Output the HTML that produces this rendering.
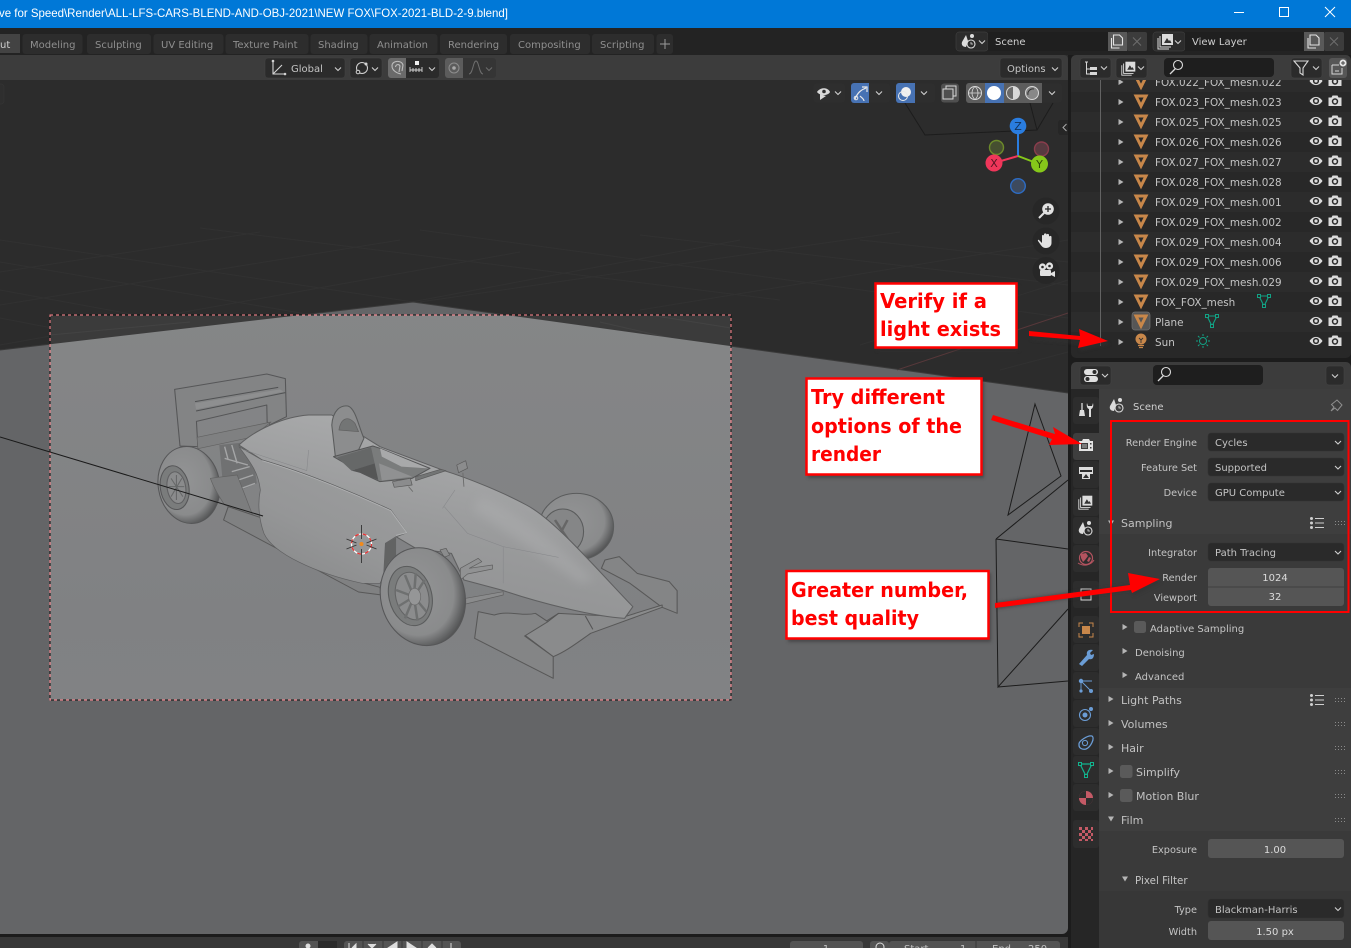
<!DOCTYPE html>
<html><head><meta charset="utf-8"><title>Blender</title>
<style>
html,body{margin:0;padding:0;background:#1c1c1c;overflow:hidden}
svg{display:block}
text{font-family:"DejaVu Sans","Liberation Sans",sans-serif;font-size:10px;fill:#c4c4c4}
#rows text{font-size:10.42px}
.e{text-anchor:end;font-size:9.75px}
.m{text-anchor:middle}
.h{font-size:11px;fill:#c2c2c2}
.b{font-family:"DejaVu Sans",sans-serif;font-weight:bold;font-size:20px;fill:#f00}
.tab{fill:#8f8f8f}
</style></head><body>
<svg xmlns="http://www.w3.org/2000/svg" width="1351" height="948" viewBox="0 0 1351 948">
<defs>
<linearGradient id="fl" x1="0" y1="0" x2="0" y2="1"><stop offset="0" stop-color="#858687"/><stop offset=".5" stop-color="#808183"/><stop offset="1" stop-color="#848587"/></linearGradient>
<linearGradient id="body" x1="0" y1="1" x2=".45" y2="0"><stop offset="0" stop-color="#8c8d8e"/><stop offset=".55" stop-color="#999a9b"/><stop offset="1" stop-color="#abacad"/></linearGradient>
<linearGradient id="pod" x1="0" y1="1" x2=".6" y2="0"><stop offset="0" stop-color="#858687"/><stop offset=".5" stop-color="#959697"/><stop offset="1" stop-color="#9c9d9e"/></linearGradient>
<radialGradient id="ty" cx=".42" cy=".42" r=".62"><stop offset="0" stop-color="#939495"/><stop offset=".74" stop-color="#8a8b8c"/><stop offset="1" stop-color="#4e4f50"/></radialGradient>
<filter id="bl" x="-30%" y="-30%" width="160%" height="160%"><feGaussianBlur stdDeviation="1.6"/></filter>
<filter id="sf" x="-5%" y="-5%" width="110%" height="110%"><feGaussianBlur stdDeviation="1"/></filter>
<filter id="bb" x="-30%" y="-30%" width="160%" height="160%"><feGaussianBlur stdDeviation="14"/></filter>
<path id="ch" d="M-3,-1.5 L0,1.5 L3,-1.5" fill="none" stroke="#d0d0d0" stroke-width="1.1"/>
<path id="ar" d="M-2.5,-3 L2.5,0 L-2.5,3 Z" fill="#b5b5b5"/>
<path id="ad" d="M-3,-2.5 L3,-2.5 L0,2.5 Z" fill="#b5b5b5"/>
<g id="eye"><path d="M-6.5,0 C-3,-5.5 3,-5.5 6.5,0 C3,5.5 -3,5.5 -6.5,0Z" fill="#dcdcdc"/><circle r="3.1" fill="#2a2a2a"/><circle r="1.6" fill="#dcdcdc"/></g>
<g id="cam"><path d="M-6.5,-3.5 h3 l1,-2 h5 l1,2 h3 v8.5 h-13Z" fill="#dcdcdc"/><circle cy=".5" r="3.2" fill="#2a2a2a"/><circle cy=".5" r="1.7" fill="#dcdcdc"/></g>
<path id="me" d="M-5,-5 H5 L0,5 Z" fill="none" stroke="#c8874a" stroke-width="3" stroke-linejoin="miter"/>
<g id="dots" fill="#8a8a8a"><rect x="0" y="-2" width="1" height="1"/><rect x="3" y="-2" width="1" height="1"/><rect x="6" y="-2" width="1" height="1"/><rect x="9" y="-2" width="1" height="1"/><rect x="0" y="1" width="1" height="1"/><rect x="3" y="1" width="1" height="1"/><rect x="6" y="1" width="1" height="1"/><rect x="9" y="1" width="1" height="1"/></g>
<g id="lst" fill="#d0d0d0"><rect x="-7" y="-6" width="3" height="3" rx="1.5"/><rect x="-7" y="-1.5" width="3" height="3" rx="1.5"/><rect x="-7" y="3" width="3" height="3" rx="1.5"/><rect x="-2" y="-5" width="9" height="1"/><rect x="-2" y="-.5" width="9" height="1"/><rect x="-2" y="4" width="9" height="1"/></g>
<g id="sc"><path d="M-3,-7 L-7,0 C-8,3 -6,5 -3,5 L-1,-1 Z" fill="#dcdcdc"/><circle cx="3" cy="-6" r="2" fill="#dcdcdc"/><circle cx="2" cy="2" r="4" fill="none" stroke="#dcdcdc" stroke-width="1.1"/><path d="M2,0 V2 H4" stroke="#dcdcdc" fill="none" stroke-width=".8"/></g>
<g id="vl"><path d="M-4,-7 H7 V4 H-4Z" fill="#dcdcdc"/><path d="M-2,2 L1,-3 L3,0 L4,-1 L5.5,2Z" fill="#333"/><path d="M-6,-5 V6 H5 M-8,-3 V8 H3" fill="none" stroke="#dcdcdc" stroke-width="1"/></g>
<g id="copy"><path d="M-4,-6 H2 L5,-3 V4 H-4 Z" fill="none" stroke="#e4e4e4" stroke-width="1.1"/><path d="M-6,-3 V7 H2" fill="none" stroke="#e4e4e4" stroke-width="1.1"/></g>
</defs>

<!-- ===== viewport ===== -->
<rect x="0" y="55" width="1068" height="879" fill="#2c2c2c"/>
<!-- grid -->
<g stroke="#363636" stroke-width="1" fill="none" opacity=".55">
<path d="M0,240 L600,330 M0,262 L460,340 M0,290 L300,345 M0,318 L140,345 M200,228 L780,300 M420,230 L1068,318 M640,235 L1068,285 M860,240 L1068,262"/>
<path d="M0,345 L520,252 M0,305 L400,240 M0,272 L260,232 M210,340 L740,240 M420,302 L900,232 M640,310 L1068,240 M860,345 L1068,280 M1000,370 L1068,352"/>
</g>
<!-- plane -->
<path d="M413,302 L1068,393 L1068,934 L0,934 L0,350 Z" fill="#646567"/>
<path d="M897,370 L1068,313" stroke="#5c3a3c" stroke-width="1" opacity=".9"/>
<path d="M0,350 L413,302 L1068,393" fill="none" stroke="#3a3a3a" stroke-width="1"/>
<!-- camera frame interior -->
<rect x="50" y="315" width="681" height="385" fill="#3b3b3b"/>
<g stroke="#474747" stroke-width="1" opacity=".7"><path d="M50,335 L190,322 M50,352 L120,340 M600,322 L731,352 M650,315 L731,328"/></g>
<clipPath id="fr"><rect x="50" y="315" width="681" height="385"/></clipPath>
<path d="M413,302 L1068,393 L1068,934 L0,934 L0,350 Z" fill="url(#fl)" clip-path="url(#fr)"/>
<rect x="50" y="315" width="681" height="385" fill="none" stroke="#111" stroke-width="1"/>
<rect x="50" y="315" width="681" height="385" fill="none" stroke="#ff8088" stroke-width="1" stroke-dasharray="3 3"/>

<!-- car -->
<g transform="translate(130,350) scale(.35714,.33333)" stroke-linejoin="round" filter="url(#sf)">
 <!-- far front wheel -->
 <ellipse cx="1250" cy="530" rx="104" ry="100" fill="url(#ty)" stroke="#5a5b5c" stroke-width="3"/>
 <ellipse cx="1212" cy="545" rx="58" ry="68" fill="#858687" stroke="#5a5b5c" stroke-width="3"/>
 <path d="M1190,510 L1240,590 M1225,510 L1195,570" stroke="#666" stroke-width="7"/>
 <!-- rear wing -->
 <path d="M125,118 L383,72 L435,86 L438,200 L392,224 L384,216 L383,165 L186,214 L190,290 L140,288 Z" fill="#838485" stroke="#565758" stroke-width="3"/>
 <path d="M182,155 L415,112 M185,183 L435,128" stroke="#505152" stroke-width="3" fill="none"/>
 <path d="M182,160 L420,118 L430,125 L185,178Z" fill="#8e8f90"/>
 <path d="M188,262 L395,216 L340,262 L190,296 Z" fill="#7f8081" stroke="#626262" stroke-width="2"/>
 <!-- rear suspension -->
 <path d="M250,285 L340,275 L355,400 L300,425 L260,400 Z" fill="#707172"/>
 <path d="M265,290 L275,330 M285,285 L300,340 M265,325 L330,345 M285,365 L335,350 M290,395 L345,375 M300,420 L350,400" stroke="#a5a6a7" stroke-width="4" fill="none"/>
 <!-- rear wheel -->
 <ellipse cx="165" cy="405" rx="86" ry="116" transform="rotate(-8 165 405)" fill="url(#ty)" stroke="#565758" stroke-width="3"/>
 <ellipse cx="125" cy="413" rx="40" ry="66" transform="rotate(-8 125 413)" fill="#7a7b7c" stroke="#565758" stroke-width="3"/>
 <ellipse cx="130" cy="413" rx="26" ry="48" transform="rotate(-8 130 413)" fill="#8a8b8c" stroke="#606162" stroke-width="3"/>
 <path d="M130,375 V450 M108,410 H152 M115,385 L148,440 M145,385 L115,440" stroke="#666768" stroke-width="3"/>
 <!-- fender -->
 <path d="M225,385 L300,375 L318,425 L345,500 L265,465 C250,440 235,415 225,385Z" fill="#7c7d7e" stroke="#626262" stroke-width="2"/>
 <!-- floor -->
 <path d="M262,510 L275,470 L372,505 L640,695 L700,712 L705,735 L640,726 Z" fill="#808182" stroke="#585858" stroke-width="3"/>
 <!-- front wing -->
 <path d="M1330,630 L1370,620 L1420,670 L1510,695 L1532,722 L1532,790 L1490,772 L1400,700 L1320,655 Z" fill="#848586" stroke="#585858" stroke-width="3"/>
 <path d="M1105,855 L1200,790 L1285,795 L1385,800 L1490,765 L1490,772 L1290,850 C1250,880 1220,905 1185,920 Z" fill="#8a8b8c" stroke="#585858" stroke-width="3"/>
 <path d="M975,785 L1020,795 C1060,780 1100,800 1135,790 L1170,815 L1105,858 L1185,920 L1185,985 L965,865 Z" fill="#848586" stroke="#585858" stroke-width="3"/>
 <path d="M1275,798 L1296,838 M1200,790 L1170,815" stroke="#555" stroke-width="3"/>
 <!-- body -->
 <path d="M305,285 C350,240 430,200 500,195 L565,195 L640,250 L700,290 L880,362 C950,385 1050,430 1110,465 C1190,510 1300,650 1408,770 L1385,805 C1300,800 1150,760 1040,720 L935,690 L900,610 L800,595 L745,560 L775,548 L730,480 C650,440 500,370 370,330 Z" fill="url(#body)" stroke="#5e5f60" stroke-width="3"/>
 <path d="M305,290 C340,340 360,370 365,420 C355,470 365,520 375,550 C400,610 520,670 650,700 L700,700 L710,680 L715,580 L745,560 L775,548 L730,480 C650,440 500,370 370,330 Z" fill="url(#pod)" stroke="#606162" stroke-width="2"/>
 <path d="M980,440 C1080,480 1200,580 1300,690 L1260,700 C1150,620 1050,540 960,480Z" fill="#b0b1b2" opacity=".4" filter="url(#bb)"/>
 <path d="M710,680 L715,580 L745,562 L745,620 C725,630 715,650 710,680Z" fill="#626364"/>
 <path d="M370,332 C500,372 650,442 730,482 L775,548 L745,556" fill="none" stroke="#aeafb0" stroke-width="3"/>
 <path d="M880,470 L945,550 L1045,590 L1200,622 M910,420 L875,475 M1045,590 L1045,700 M320,300 L495,362 L500,300" stroke="#86878a" stroke-width="1.500" fill="none"/>
 <!-- roll hoop + cockpit -->
 <path d="M565,225 C568,180 590,165 610,168 C632,175 640,230 655,265 L640,300 L575,320 Z" fill="#8c8d8e" stroke="#5a5b5c" stroke-width="3"/>
 <path d="M585,240 C590,205 610,195 630,220 L640,245 Z" fill="#737475" stroke="#606060" stroke-width="2"/>
 <path d="M570,320 L680,288 L700,295 L840,355 L790,385 L700,395 L650,370 Z" fill="#7a7b7c" stroke="#555657" stroke-width="3"/>
 <path d="M580,322 L675,292 L685,340 L620,362 Z" fill="#666768"/>
 <path d="M620,362 L685,340 L695,390 L650,370Z" fill="#555657"/>
 <path d="M697,340 L790,380 L705,392 Z" fill="#909192"/>
 <path d="M700,295 L835,355 L760,350 L705,320Z" fill="#a8a9aa"/>
 <path d="M800,392 L885,362 L870,358 L800,380Z" fill="#737475" stroke="#585858" stroke-width="2"/>
 <path d="M735,395 L785,385 L790,405 L740,412Z" fill="#8b8c8d" stroke="#5a5a5a" stroke-width="2"/>
 <path d="M915,345 L940,332 L945,355 L920,368Z" fill="#8b8c8d" stroke="#5a5a5a" stroke-width="2"/>
 <path d="M932,368 L935,410 M780,410 L792,425" stroke="#6a6a6a" stroke-width="2.500"/>
 <!-- front suspension -->
 <path d="M925,655 L975,625 L985,635 L950,655 L1015,645 L1015,657 L945,672 L925,690Z" fill="#919293" stroke="#606060" stroke-width="2"/>
 <path d="M940,745 L1045,725 L1045,735 L940,762Z" fill="#8a8b8c" stroke="#606060" stroke-width="2"/>
 <path d="M868,600 L885,595 L895,615 L880,622Z" fill="#8b8c8d" stroke="#5a5a5a" stroke-width="2"/>
 <!-- front wheel -->
 <ellipse cx="820" cy="740" rx="118" ry="148" transform="rotate(-12 820 740)" fill="url(#ty)" stroke="#565758" stroke-width="3"/>
 <ellipse cx="785" cy="738" rx="60" ry="90" transform="rotate(-12 785 738)" fill="#7a7b7c" stroke="#5a5b5c" stroke-width="3"/>
 <ellipse cx="790" cy="738" rx="46" ry="72" transform="rotate(-12 790 738)" fill="#8b8c8d" stroke="#626364" stroke-width="3"/>
 <path d="M795,740 L770,675 M795,740 L800,670 M795,740 L745,720 M795,740 L825,690 M795,740 L750,770 M795,740 L770,805 M795,740 L805,812 M795,740 L830,785" stroke="#6e6f70" stroke-width="7"/>
 <ellipse cx="797" cy="740" rx="17" ry="25" fill="#959697" stroke="#6a6a6a" stroke-width="2"/>
</g>
<!-- lines -->
<path d="M0,437 L263,516" stroke="#1a1a1a" stroke-width="1" fill="none"/>
<!-- 3d cursor -->
<g transform="translate(361.5,544)" fill="none">
 <circle r="10" stroke="#fff" stroke-width="1.300"/>
 <circle r="10" stroke="#e63232" stroke-width="1.300" stroke-dasharray="4 4"/>
 <path d="M0,-19 V-5 M0,5 V19 M-15,-5 L-5,-1 M5,1 L15,5 M-15,5 L-5,1 M5,-1 L15,-5" stroke="#333" stroke-width=".9"/>
 <circle r="2" fill="#f08a1c"/>
</g>
<!-- camera wire -->
<g fill="none" stroke="#1c1c1c" stroke-width="1">
 <path d="M1035,404 L1061,476 L1008,515 Z"/>
 <path d="M996,539 L1068,480 M996,539 L1068,549 M996,539 L998,687 L1068,609 M998,687 L1068,681"/>
 <path d="M905,103 L925,135 L1037,130 L1053,103 M1030,103 L1037,130"/>
</g>

<!-- nav gizmo -->
<g>
 <path d="M1018,126 V156" stroke="#2a7de0" stroke-width="2"/>
 <path d="M1018,156 L994,163" stroke="#f0365a" stroke-width="2"/>
 <path d="M1018,156 L1039,164" stroke="#86c81a" stroke-width="2"/>
 <circle cx="996.500" cy="147.500" r="7" fill="#464f30" stroke="#6c8a2a" stroke-width="1.400"/>
 <circle cx="1041.500" cy="149" r="7" fill="#573a40" stroke="#8a3d4c" stroke-width="1.400"/>
 <circle cx="1018" cy="186" r="7.300" fill="#3d4a5e" stroke="#2d6cc4" stroke-width="1.400"/>
 <circle cx="1018" cy="126" r="8.300" fill="#2a7de0"/>
 <circle cx="994" cy="163" r="8.500" fill="#f0365a"/>
 <circle cx="1039.500" cy="164" r="8.500" fill="#86c81a"/>
 <text x="1018" y="130" class="m" style="fill:#12325c;font-size:11px">Z</text>
 <text x="994" y="167" class="m" style="fill:#5a1424;font-size:11px">X</text>
 <text x="1039.500" y="168" class="m" style="fill:#2e4a08;font-size:11px">Y</text>
</g>
<circle cx="1046" cy="211" r="13.500" fill="#272727"/>
<circle cx="1046" cy="241" r="13.500" fill="#272727"/>
<circle cx="1046" cy="270.500" r="13.500" fill="#272727"/>
<g fill="#e2e2e2">
 <circle cx="1048" cy="209" r="5.800"/><path d="M1044,213 L1039,218" stroke="#e2e2e2" stroke-width="2"/>
 <path d="M1045,209 H1051 M1048,206 V212" stroke="#272727" stroke-width="1.300"/>
 <path d="M1039,240 L1042,243 V236 C1042,234.500 1044,234.500 1044,236 V234.500 C1044,233 1046.500,233 1046.500,234.500 V235 C1046.500,233.500 1049,233.500 1049,235 V237 C1049,235.500 1051.500,235.500 1051.500,237 V243 C1051.500,246 1049,248 1046,248 C1042,248 1041,245 1038,241 C1037.500,240 1038.500,239.500 1039,240Z"/>
 <circle cx="1042.500" cy="267" r="3.600"/><circle cx="1049.500" cy="266" r="3.600"/>
 <rect x="1040" y="270" width="11" height="6" rx="1"/><path d="M1051,273 L1055,271 V277 L1051,275Z"/>
</g>
<g fill="#272727"><circle cx="1042.500" cy="267" r="1.300"/><circle cx="1049.500" cy="266" r="1.300"/></g>
<path d="M1060,120 h8 v15 h-8 a4,4 0 0 1 -2,-3 v-9 a4,4 0 0 1 2,-3Z" fill="#262626"/>
<path d="M1066.500,124 L1063,127.500 L1066.500,131" fill="none" stroke="#aaa" stroke-width="1"/>
<path d="M0,84 h1 a3,3 0 0 1 3,3 v14 a3,3 0 0 1 -3,3 h-1" fill="#2e2e2e" stroke="#343434" stroke-width=".7"/>

<!-- viewport overlays row -->
<g>
 <rect x="813.500" y="83.500" width="31.500" height="19" rx="3" fill="#2e2e2e"/>
 <path d="M817,92 C820,87 828,87 830,92 C828,96 820,96 817,92Z" fill="#d8d8d8"/><circle cx="824" cy="91.500" r="1.800" fill="#2e2e2e"/><path d="M820,94 L820,100 L826,96Z" fill="#d8d8d8"/>
 <use href="#ch" x="838" y="93"/>
 <rect x="851" y="83.500" width="39" height="19" rx="3" fill="#2e2e2e"/>
 <path d="M851,86 a3,3 0 0 1 3,-3 h15 v20 h-15 a3,3 0 0 1 -3,-3Z" fill="#4772b3"/>
 <path d="M855,99 C858,92 861,90 866,88 M862,87 H867 V92 M860,96 C862,98 864,99 864,101" fill="none" stroke="#eaeaea" stroke-width="1.200"/><circle cx="856" cy="98" r="1.800" fill="none" stroke="#eaeaea"/>
 <use href="#ch" x="879" y="93"/>
 <rect x="896" y="83.500" width="39" height="19" rx="3" fill="#2e2e2e"/>
 <path d="M896,86 a3,3 0 0 1 3,-3 h16 v20 h-16 a3,3 0 0 1 -3,-3Z" fill="#4772b3"/>
 <circle cx="906" cy="92" r="5" fill="#f0f0f0"/><circle cx="903" cy="96" r="4.500" fill="none" stroke="#eaeaea"/>
 <use href="#ch" x="924" y="93"/>
 <rect x="941" y="83.500" width="18" height="19" rx="3" fill="#4f4f4f"/>
 <rect x="946" y="86" width="10" height="10" fill="none" stroke="#d8d8d8"/><rect x="943" y="89" width="10" height="10" fill="#4f4f4f" stroke="#d8d8d8"/>
 <rect x="966" y="83.500" width="96" height="19" rx="3" fill="#2e2e2e"/>
 <path d="M966,86 a3,3 0 0 1 3,-3 h73 v20 h-73 a3,3 0 0 1 -3,-3Z" fill="#5d5d5d"/>
 <rect x="985" y="83" width="19" height="20" fill="#4772b3"/>
 <circle cx="975" cy="93" r="6.500" fill="none" stroke="#d8d8d8"/><path d="M968.500,93 H981.500 M975,86.500 C971,90 971,96 975,99.500 C979,96 979,90 975,86.500" fill="none" stroke="#d8d8d8" stroke-width=".8"/>
 <circle cx="994" cy="93" r="7" fill="#fff"/>
 <circle cx="1013" cy="93" r="6.500" fill="#6a6a6a" stroke="#d8d8d8"/><path d="M1013,86.500 a6.500,6.500 0 0 1 0,13Z" fill="#d8d8d8"/>
 <circle cx="1032" cy="93" r="6.500" fill="#888" stroke="#d8d8d8"/><path d="M1028,95 a5,5 0 0 1 6,-6" fill="none" stroke="#333"/>
 <use href="#ch" x="1052" y="93"/>
</g>

<!-- viewport header -->
<path d="M0,55 H1064 a4,4 0 0 1 4,4 V80 H0Z" fill="#3c3c3c"/>
<rect x="265" y="58" width="80" height="20" rx="3" fill="#2b2b2b" stroke="#444" stroke-width=".5"/>
<path d="M273,61 V74 H285 M273,74 L282,65" fill="none" stroke="#d4d4d4" stroke-width="1.100"/><circle cx="273" cy="61" r="1.300" fill="#d4d4d4"/><circle cx="285" cy="74" r="1.300" fill="#d4d4d4"/>
<text x="291" y="72">Global</text><use href="#ch" x="338" y="69"/>
<rect x="350" y="58" width="32" height="20" rx="3" fill="#2b2b2b" stroke="#444" stroke-width=".5"/>
<circle cx="362" cy="68" r="5.500" fill="none" stroke="#d4d4d4"/><circle cx="358" cy="72" r="1.800" fill="#2b2b2b" stroke="#d4d4d4"/><circle cx="366" cy="64" r="1.500" fill="#d4d4d4"/><use href="#ch" x="375" y="69"/>
<rect x="388" y="58" width="51" height="20" rx="3" fill="#2b2b2b"/>
<path d="M388,61 a3,3 0 0 1 3,-3 h15 v20 h-15 a3,3 0 0 1 -3,-3Z" fill="#6a6a6a"/>
<path d="M401,74 C396,73 392,70 392,66 C392,60 402,60 403,65 L402,71 M399,72 L400,66 C399,64 396,64 395.500,67" fill="none" stroke="#bdbdbd" stroke-width="1.100"/>
<path d="M410,67 V72 M410,70 H422 M413,68 V72 M416,68 V72 M419,68 V72 M422,67 V72" stroke="#d4d4d4" stroke-width=".9"/><rect x="415" y="61" width="4" height="4" fill="#eee"/><use href="#ch" x="432" y="69"/>
<rect x="445" y="58" width="51" height="20" rx="3" fill="#353535"/>
<path d="M445,61 a3,3 0 0 1 3,-3 h15 v20 h-15 a3,3 0 0 1 -3,-3Z" fill="#5c5c5c"/>
<circle cx="454" cy="68" r="5" fill="none" stroke="#8e8e8e"/><circle cx="454" cy="68" r="1.800" fill="#a8a8a8"/>
<path d="M469,74 C473,74 473,61 476,61 C479,61 479,74 483,74" fill="none" stroke="#6e6e6e"/><use href="#ch" x="489" y="69" opacity=".35"/>
<rect x="1000" y="58" width="62" height="20" rx="3" fill="#2b2b2b" stroke="#444" stroke-width=".5"/>
<text x="1007" y="72">Options</text><use href="#ch" x="1055" y="69"/>

<!-- separator strips / bottom -->
<rect x="0" y="934" width="1070" height="3" fill="#1c1c1c"/>
<path d="M1062,934 a6,6 0 0 0 6,-6 v6Z" fill="#1c1c1c"/>
<rect x="0" y="937" width="1070" height="11" fill="#383838"/>
<rect x="299" y="941" width="38" height="10" rx="3" fill="#545454"/><rect x="318" y="941" width="19" height="10" fill="#2b2b2b"/><circle cx="308" cy="946" r="2.500" fill="#ddd"/>
<rect x="344" y="941" width="117" height="10" rx="3" fill="#545454"/>
<path d="M363,941 V951 M383,941 V951 M402,941 V951 M422,941 V951 M442,941 V951" stroke="#383838"/>
<path d="M349,943 V948 M352,948 L356,944 V948 M368,944 L372,948 L376,944 M397,942 L388,948 H397Z M407,942 L416,948 H407Z M428,948 L432,944 L436,948 M451,943 V948" stroke="#ddd" fill="#ddd"/>
<rect x="790" y="941" width="73" height="10" rx="3" fill="#545454"/><text x="826" y="952" class="m">1</text>
<rect x="870" y="941" width="19" height="10" rx="3" fill="#545454"/><circle cx="880" cy="947" r="4" fill="none" stroke="#ddd"/>
<rect x="889" y="941" width="171" height="10" rx="3" fill="#545454"/><path d="M976,941 V951" stroke="#383838"/>
<text x="904" y="952">Start</text><text x="960" y="952">1</text><text x="992" y="952">End</text><text x="1028" y="952">250</text>

<!-- ===== top bars ===== -->
<rect x="0" y="0" width="1351" height="28" fill="#0078d7"/>
<text x="-1" y="17" textLength="509" lengthAdjust="spacingAndGlyphs" style="font-family:'Liberation Sans',sans-serif;font-size:12px;fill:#fff">ve for Speed\Render\ALL-LFS-CARS-BLEND-AND-OBJ-2021\NEW FOX\FOX-2021-BLD-2-9.blend]</text>
<path d="M1234,12.500 H1244" stroke="#fff"/><rect x="1279.500" y="7.500" width="9" height="9" fill="none" stroke="#fff"/><path d="M1325,7 L1335,17 M1335,7 L1325,17" stroke="#fff"/>
<rect x="0" y="28" width="1351" height="27" fill="#232323"/>
<rect x="0" y="34" width="20" height="19" fill="#434343"/>
<text x="0" y="48" style="fill:#d0d0d0">ut</text>
<g fill="#2d2d2d">
<rect x="22.500" y="34" width="60" height="20" rx="3"/><rect x="87" y="34" width="64" height="20" rx="3"/><rect x="153.500" y="34" width="70" height="20" rx="3"/><rect x="225.500" y="34" width="83" height="20" rx="3"/><rect x="310.500" y="34" width="57" height="20" rx="3"/><rect x="369.500" y="34" width="68" height="20" rx="3"/><rect x="440" y="34" width="67" height="20" rx="3"/><rect x="510" y="34" width="80" height="20" rx="3"/><rect x="592" y="34" width="62" height="20" rx="3"/><rect x="656.500" y="34" width="16.500" height="20" rx="3"/>
</g>
<g class="tab">
<text x="30" y="48" class="tab">Modeling</text><text x="95" y="48" class="tab">Sculpting</text><text x="161" y="48" class="tab">UV Editing</text><text x="233" y="48" class="tab">Texture Paint</text><text x="318" y="48" class="tab">Shading</text><text x="377" y="48" class="tab">Animation</text><text x="448" y="48" class="tab">Rendering</text><text x="518" y="48" class="tab">Compositing</text><text x="600" y="48" class="tab">Scripting</text>
</g>
<path d="M665,39 V49 M660,44 H670" stroke="#9a9a9a"/>

<!-- scene widgets -->
<rect x="956" y="32" width="32" height="19" rx="3" fill="#2c2c2c" stroke="#464646" stroke-width=".5"/>
<use href="#sc" x="969" y="42"/><use href="#ch" x="982" y="42"/>
<rect x="988" y="32" width="120" height="19" fill="#1f1f1f"/><text x="995" y="45" style="fill:#cfcfcf">Scene</text>
<rect x="1108" y="32" width="19" height="19" fill="#595959"/><use href="#copy" x="1117.500" y="41"/>
<rect x="1127" y="32" width="20" height="19" rx="2" fill="#3c3c3c"/><path d="M1133,37.500 L1141,45.500 M1141,37.500 L1133,45.500" stroke="#6e6e6e"/>
<rect x="1153" y="32" width="32" height="19" rx="3" fill="#2c2c2c" stroke="#464646" stroke-width=".5"/>
<use href="#vl" x="1166" y="41"/><use href="#ch" x="1178" y="42"/>
<rect x="1185" y="32" width="119" height="19" fill="#1f1f1f"/><text x="1192" y="45" style="fill:#cfcfcf">View Layer</text>
<rect x="1304" y="32" width="20" height="19" fill="#595959"/><use href="#copy" x="1314" y="41"/>
<rect x="1324" y="32" width="20" height="19" rx="2" fill="#3c3c3c"/><path d="M1330,37.500 L1338,45.500 M1338,37.500 L1330,45.500" stroke="#6e6e6e"/>

<!-- ===== outliner ===== -->
<rect x="1068" y="55" width="283" height="893" fill="#1c1c1c"/>
<rect x="1071" y="55" width="280" height="303" rx="5" fill="#282828"/>
<g fill="#2c2c2c">
<rect x="1071" y="72" width="280" height="20"/><rect x="1071" y="112" width="280" height="20"/><rect x="1071" y="152" width="280" height="20"/><rect x="1071" y="192" width="280" height="20"/><rect x="1071" y="232" width="280" height="20"/><rect x="1071" y="272" width="280" height="20"/><rect x="1071" y="312" width="280" height="20"/>
</g>
<path d="M1100.500,80 V346" stroke="#636363"/>
<g id="rows">
<use href="#ar" x="1121" y="82"/><use href="#me" x="1141" y="82"/><text x="1155" y="86">FOX.022_FOX_mesh.022</text><use href="#eye" x="1316" y="81"/><use href="#cam" x="1335" y="81"/>
<use href="#ar" x="1121" y="102"/><use href="#me" x="1141" y="101"/><text x="1155" y="106">FOX.023_FOX_mesh.023</text><use href="#eye" x="1316" y="101"/><use href="#cam" x="1335" y="101"/>
<use href="#ar" x="1121" y="122"/><use href="#me" x="1141" y="121"/><text x="1155" y="126">FOX.025_FOX_mesh.025</text><use href="#eye" x="1316" y="121"/><use href="#cam" x="1335" y="121"/>
<use href="#ar" x="1121" y="142"/><use href="#me" x="1141" y="141"/><text x="1155" y="146">FOX.026_FOX_mesh.026</text><use href="#eye" x="1316" y="141"/><use href="#cam" x="1335" y="141"/>
<use href="#ar" x="1121" y="162"/><use href="#me" x="1141" y="161"/><text x="1155" y="166">FOX.027_FOX_mesh.027</text><use href="#eye" x="1316" y="161"/><use href="#cam" x="1335" y="161"/>
<use href="#ar" x="1121" y="182"/><use href="#me" x="1141" y="181"/><text x="1155" y="186">FOX.028_FOX_mesh.028</text><use href="#eye" x="1316" y="181"/><use href="#cam" x="1335" y="181"/>
<use href="#ar" x="1121" y="202"/><use href="#me" x="1141" y="201"/><text x="1155" y="206">FOX.029_FOX_mesh.001</text><use href="#eye" x="1316" y="201"/><use href="#cam" x="1335" y="201"/>
<use href="#ar" x="1121" y="222"/><use href="#me" x="1141" y="221"/><text x="1155" y="226">FOX.029_FOX_mesh.002</text><use href="#eye" x="1316" y="221"/><use href="#cam" x="1335" y="221"/>
<use href="#ar" x="1121" y="242"/><use href="#me" x="1141" y="241"/><text x="1155" y="246">FOX.029_FOX_mesh.004</text><use href="#eye" x="1316" y="241"/><use href="#cam" x="1335" y="241"/>
<use href="#ar" x="1121" y="262"/><use href="#me" x="1141" y="261"/><text x="1155" y="266">FOX.029_FOX_mesh.006</text><use href="#eye" x="1316" y="261"/><use href="#cam" x="1335" y="261"/>
<use href="#ar" x="1121" y="282"/><use href="#me" x="1141" y="281"/><text x="1155" y="286">FOX.029_FOX_mesh.029</text><use href="#eye" x="1316" y="281"/><use href="#cam" x="1335" y="281"/>
<use href="#ar" x="1121" y="302"/><use href="#me" x="1141" y="301"/><text x="1155" y="306">FOX_FOX_mesh</text><use href="#eye" x="1316" y="301"/><use href="#cam" x="1335" y="301"/>
<path d="M1259,296 H1269 L1264,306Z" fill="none" stroke="#12a184" stroke-width="1.100"/><g fill="#282828" stroke="#12a184"><rect x="1257.500" y="294.500" width="3" height="3"/><rect x="1267.500" y="294.500" width="3" height="3"/><rect x="1262.500" y="304.500" width="3" height="3"/></g>
<use href="#ar" x="1121" y="322"/><rect x="1132" y="312" width="18" height="18" rx="3" fill="#565656" stroke="#707070" stroke-width=".7"/><use href="#me" x="1141" y="321"/><text x="1155" y="326">Plane</text><use href="#eye" x="1316" y="321"/><use href="#cam" x="1335" y="321"/>
<path d="M1207,316 H1217 L1212,326Z" fill="none" stroke="#12a184" stroke-width="1.100"/><g fill="#2c2c2c" stroke="#12a184"><rect x="1205.500" y="314.500" width="3" height="3"/><rect x="1215.500" y="314.500" width="3" height="3"/><rect x="1210.500" y="324.500" width="3" height="3"/></g>
<use href="#ar" x="1121" y="342"/><circle cx="1141" cy="339" r="5.500" fill="#c8874a"/><path d="M1139,338 L1141,340 L1143,338 M1141,340 V343" stroke="#333" fill="none" stroke-width=".9"/><path d="M1138,345.500 H1144 M1139,347.500 H1143" stroke="#c8874a" stroke-width="1.200"/><text x="1155" y="346">Sun</text><use href="#eye" x="1316" y="341"/><use href="#cam" x="1335" y="341"/>
<g fill="none" stroke="#12a184"><circle cx="1203" cy="341" r="3.500"/><path d="M1203,334 V336 M1203,346 V348 M1196,341 H1198 M1208,341 H1210 M1198,336 L1199.500,337.500 M1206.500,344.500 L1208,346 M1208,336 L1206.500,337.500 M1199.500,344.500 L1198,346"/></g>
</g>
<!-- outliner header -->
<path d="M1071,80 V60 a5,5 0 0 1 5,-5 H1346 a5,5 0 0 1 5,5 V80Z" fill="#3c3c3c"/>
<rect x="1080" y="58" width="31" height="20" rx="3" fill="#2b2b2b" stroke="#474747" stroke-width=".5"/>
<path d="M1085,62 H1088 M1086.500,62 V74 H1090 M1086.500,69 H1090" stroke="#d8d8d8" fill="none"/><rect x="1090" y="67" width="7" height="3" fill="#d8d8d8"/><rect x="1090" y="72" width="7" height="3" fill="#d8d8d8"/><use href="#ch" x="1104" y="68"/>
<rect x="1116" y="58" width="31" height="20" rx="3" fill="#2b2b2b" stroke="#474747" stroke-width=".5"/>
<use href="#vl" transform="translate(1129,68) scale(.9)"/><use href="#ch" x="1141" y="68"/>
<rect x="1164" y="58" width="110" height="19" rx="4" fill="#1e1e1e"/>
<circle cx="1178" cy="65" r="4.500" fill="none" stroke="#dadada" stroke-width="1.100"/><path d="M1175,69 L1170,74" stroke="#dadada" stroke-width="1.300"/>
<rect x="1291" y="58" width="31" height="20" rx="3" fill="#2b2b2b" stroke="#474747" stroke-width=".5"/>
<path d="M1294,61 H1308 L1303,68 V75 L1300,73 V68Z" fill="none" stroke="#dadada" stroke-width="1.100"/><use href="#ch" x="1316" y="68"/>
<rect x="1329" y="58" width="18" height="20" rx="3" fill="#565656"/>
<path d="M1332,65 H1339 M1332,65 V74 H1342 V68 M1335,71 H1339" stroke="#d6d6d6" fill="none"/><circle cx="1343" cy="63" r="3.500" fill="#e4e4e4"/><path d="M1341,63 H1345 M1343,61 V65" stroke="#444"/>

<!-- ===== properties ===== -->
<path d="M1071,948 V367 a5,5 0 0 1 5,-5 H1346 a5,5 0 0 1 5,5 V948Z" fill="#3c3c3c"/>
<rect x="1071" y="389" width="28" height="559" fill="#262626"/>
<rect x="1099" y="389" width="252" height="559" fill="#3e3e3e"/>
<!-- props header -->
<rect x="1080" y="366" width="31" height="19" rx="3" fill="#2b2b2b" stroke="#474747" stroke-width=".5"/>
<rect x="1084" y="369" width="14" height="6" rx="3" fill="#e0e0e0"/><rect x="1084" y="376" width="14" height="6" rx="3" fill="#e0e0e0"/><circle cx="1094.500" cy="372" r="2" fill="#2b2b2b"/><circle cx="1087.500" cy="379" r="2" fill="#2b2b2b"/><use href="#ch" x="1105" y="375.500"/>
<rect x="1153" y="365" width="110" height="20" rx="4" fill="#1e1e1e"/>
<circle cx="1166" cy="372" r="4.500" fill="none" stroke="#dadada" stroke-width="1.100"/><path d="M1163,376 L1158,381" stroke="#dadada" stroke-width="1.300"/>
<rect x="1326" y="366" width="18" height="19" rx="3" fill="#2b2b2b" stroke="#474747" stroke-width=".5"/><use href="#ch" x="1335" y="376"/>

<!-- tabs -->
<g fill="#2d2d2d">
<rect x="1073" y="397" width="26" height="27" rx="3"/>
<rect x="1073" y="461" width="26" height="27" rx="3"/><rect x="1073" y="489" width="26" height="27" rx="3"/><rect x="1073" y="517" width="26" height="27" rx="3"/><rect x="1073" y="545" width="26" height="27" rx="3"/>
<rect x="1073" y="581" width="26" height="27" rx="3"/>
<rect x="1073" y="616" width="26" height="27" rx="3"/><rect x="1073" y="644" width="26" height="27" rx="3"/><rect x="1073" y="672" width="26" height="27" rx="3"/><rect x="1073" y="700" width="26" height="27" rx="3"/><rect x="1073" y="728" width="26" height="27" rx="3"/><rect x="1073" y="756" width="26" height="27" rx="3"/><rect x="1073" y="784" width="26" height="27" rx="3"/>
<rect x="1073" y="820" width="26" height="28" rx="3"/>
</g>
<path d="M1099,433 H1076 a3,3 0 0 0 -3,3 V457 a3,3 0 0 0 3,3 H1099Z" fill="#3e3e3e"/>
<!-- tool -->
<path d="M1082,403 V410" stroke="#dcdcdc" stroke-width="1.300"/><path d="M1080,410 h4 l1,6 h-6Z" fill="#dcdcdc"/>
<path d="M1087,403 C1086,407 1088,409 1089,409 V417 H1091 V409 C1092,409 1094,407 1093,403 L1092,406 H1088Z" fill="#dcdcdc"/>
<!-- render -->
<path d="M1079,441 h3 l1,-2 h6 l1,2 h3 v10 h-14Z" fill="#e4e4e4"/><rect x="1081" y="443" width="7" height="6" fill="#3e3e3e"/><path d="M1082,445 H1087 M1082,447 H1087" stroke="#e4e4e4" stroke-width=".7"/><rect x="1090" y="443" width="1.500" height="1.500" fill="#3e3e3e"/><rect x="1090" y="447" width="1.500" height="1.500" fill="#3e3e3e"/>
<!-- output -->
<path d="M1079,467 H1093 V474 H1090 V479 H1082 V474 H1079Z" fill="#dcdcdc"/><rect x="1080" y="470" width="12" height="2" fill="#2d2d2d"/><path d="M1083,478 L1086,474 L1089,478Z" fill="#2d2d2d"/>
<use href="#vl" transform="translate(1086,502) scale(.9)"/>
<use href="#sc" x="1086" y="529"/>
<!-- world -->
<circle cx="1086" cy="558" r="6.500" fill="#2d2d2d" stroke="#b3535f" stroke-width="1.200"/><path d="M1081,554 L1086,553 L1088,556 L1085,560 L1083,562 L1081,558Z M1089,557 L1091,558 L1089,562 L1087,561Z" fill="#b3535f"/><path d="M1078,563 C1084,567 1091,565 1094,560" fill="none" stroke="#b3535f"/>
<!-- collection -->
<rect x="1081" y="589" width="10" height="11" fill="#2d2d2d" stroke="#d8d8d8"/><path d="M1084,595 H1088" stroke="#d8d8d8"/>
<!-- object -->
<rect x="1082" y="626" width="8" height="8" fill="#c8874a"/><path d="M1079,627 V623 H1083 M1089,623 H1093 V627 M1093,633 V637 H1089 M1083,637 H1079 V633" fill="none" stroke="#c8874a"/>
<!-- modifier -->
<path d="M1079,664 L1087,655 C1086,651 1089,649 1093,650 L1090,653 L1091,655 L1094,654 C1094,658 1092,660 1089,659 L1082,666Z" fill="#6b9dd6"/>
<!-- particles -->
<g fill="#6b9dd6"><circle cx="1081" cy="681" r="2.200"/><circle cx="1081" cy="691" r="1.600"/><circle cx="1091" cy="691" r="2"/></g><path d="M1081,681 H1092 M1081,681 L1091,691 M1081,681 V691" stroke="#6b9dd6" stroke-width=".9" fill="none"/>
<!-- physics -->
<circle cx="1085" cy="715" r="5.500" fill="none" stroke="#6b9dd6" stroke-width="1.100"/><circle cx="1085" cy="715" r="2.500" fill="#6b9dd6"/><circle cx="1091" cy="709" r="2" fill="#6b9dd6"/>
<!-- constraints -->
<path d="M1079,745 C1078,741 1088,735 1092,736 C1095,738 1091,747 1086,749 C1082,750 1079,748 1079,745Z" fill="none" stroke="#6b9dd6" stroke-width="1.300"/><circle cx="1085" cy="743" r="2.600" fill="none" stroke="#6b9dd6"/>
<!-- data -->
<path d="M1080,764 H1092 L1086,776Z" fill="none" stroke="#12b48e" stroke-width="1.200"/><g fill="#2d2d2d" stroke="#12b48e"><rect x="1078.500" y="762.500" width="3" height="3"/><rect x="1090.500" y="762.500" width="3" height="3"/><rect x="1084.500" y="774.500" width="3" height="3"/></g>
<!-- material -->
<circle cx="1086" cy="798" r="7" fill="#c45a66"/><path d="M1086,791 a7,7 0 0 0 -7,7 H1086Z" fill="#2d2d2d"/><path d="M1086,798 H1093 a7,7 0 0 1 -7,7Z" fill="#2d2d2d"/>
<!-- texture -->
<g><rect x="1079" y="827" width="14" height="14" fill="#c45a66"/><g fill="#2d2d2d"><rect x="1082" y="827" width="3" height="3"/><rect x="1088" y="827" width="3" height="3"/><rect x="1079" y="830" width="3" height="3"/><rect x="1085" y="830" width="3" height="3"/><rect x="1091" y="830" width="2" height="3"/><rect x="1082" y="833" width="3" height="3"/><rect x="1088" y="833" width="3" height="3"/><rect x="1079" y="836" width="3" height="3"/><rect x="1085" y="836" width="3" height="3"/><rect x="1091" y="836" width="2" height="3"/><rect x="1082" y="839" width="3" height="2"/><rect x="1088" y="839" width="3" height="2"/></g></g>

<!-- panel bodies -->
<rect x="1099" y="534" width="252" height="154" fill="#3a3a3a"/>
<rect x="1099" y="831" width="252" height="60" fill="#3a3a3a"/>
<rect x="1099" y="891" width="252" height="57" fill="#373737"/>

<use href="#sc" x="1117" y="406"/>
<text x="1133" y="410" style="fill:#cfcfcf">Scene</text>
<path d="M1331,411 L1334,407 L1331.500,404.500 L1337,400 L1342,405 L1337.500,410.500 L1335,408 L1331,411Z" fill="none" stroke="#8f8f8f"/>

<text x="1197" y="446" class="e">Render Engine</text>
<text x="1197" y="471" class="e">Feature Set</text>
<text x="1197" y="496" class="e">Device</text>
<g fill="#2a2a2a" stroke="#333" stroke-width=".6">
<rect x="1208" y="433" width="136" height="18" rx="3"/><rect x="1208" y="458" width="136" height="18" rx="3"/><rect x="1208" y="483" width="136" height="18" rx="3"/><rect x="1208" y="543" width="136" height="18" rx="3"/><rect x="1208" y="899" width="136" height="19" rx="3"/>
</g>
<text x="1215" y="446">Cycles</text><text x="1215" y="471">Supported</text><text x="1215" y="496">GPU Compute</text>
<use href="#ch" x="1338" y="442.500"/><use href="#ch" x="1338" y="467.500"/><use href="#ch" x="1338" y="492.500"/><use href="#ch" x="1338" y="552.500"/><use href="#ch" x="1338" y="909"/>

<use href="#ad" x="1111" y="523"/><text x="1121" y="527" class="h">Sampling</text><use href="#lst" x="1317" y="523"/><use href="#dots" x="1335" y="523"/>
<text x="1197" y="556" class="e">Integrator</text><text x="1215" y="556">Path Tracing</text>
<text x="1197" y="581" class="e">Render</text><text x="1197" y="601" class="e">Viewport</text>
<rect x="1208" y="568" width="136" height="38" rx="3" fill="#555"/><path d="M1208,587 H1344" stroke="#3e3e3e"/>
<text x="1275" y="581" class="m" style="fill:#dcdcdc">1024</text><text x="1275" y="600" class="m" style="fill:#dcdcdc">32</text>

<use href="#ar" x="1125" y="627"/><rect x="1134" y="621" width="12" height="12" rx="2.500" fill="#5a5a5a"/><text x="1150" y="632">Adaptive Sampling</text>
<use href="#ar" x="1125" y="651"/><text x="1135" y="656">Denoising</text>
<use href="#ar" x="1125" y="675"/><text x="1135" y="680">Advanced</text>

<use href="#ar" x="1111" y="699"/><text x="1121" y="704" class="h">Light Paths</text><use href="#lst" x="1317" y="700"/><use href="#dots" x="1335" y="700"/>
<use href="#ar" x="1111" y="723"/><text x="1121" y="728" class="h">Volumes</text><use href="#dots" x="1335" y="724"/>
<use href="#ar" x="1111" y="747"/><text x="1121" y="752" class="h">Hair</text><use href="#dots" x="1335" y="748"/>
<use href="#ar" x="1111" y="771"/><rect x="1120" y="765" width="12.500" height="13" rx="2.500" fill="#5a5a5a"/><text x="1136" y="776" class="h">Simplify</text><use href="#dots" x="1335" y="772"/>
<use href="#ar" x="1111" y="795"/><rect x="1120" y="789" width="12.500" height="13" rx="2.500" fill="#5a5a5a"/><text x="1136" y="800" class="h">Motion Blur</text><use href="#dots" x="1335" y="796"/>
<use href="#ad" x="1111" y="819"/><text x="1121" y="824" class="h">Film</text><use href="#dots" x="1335" y="820"/>

<text x="1197" y="853" class="e">Exposure</text><rect x="1208" y="839" width="136" height="19" rx="3" fill="#555"/><text x="1275" y="853" class="m" style="fill:#dcdcdc">1.00</text>
<use href="#ad" x="1125" y="879"/><text x="1135" y="884" style="font-size:10.3px">Pixel Filter</text>
<text x="1197" y="913" class="e">Type</text><text x="1215" y="913">Blackman-Harris</text>
<text x="1197" y="935" class="e">Width</text><rect x="1208" y="921" width="136" height="19" rx="3" fill="#555"/><text x="1275" y="935" class="m" style="fill:#dcdcdc">1.50 px</text>

<!-- red rectangle -->
<rect x="1111" y="421" width="237.500" height="191" fill="none" stroke="#f00" stroke-width="2"/>

<!-- ===== annotations ===== -->
<g fill="#333" opacity=".55" filter="url(#bl)">
<rect x="877" y="286" width="142" height="65"/><rect x="808" y="381" width="176" height="97"/><rect x="788" y="573" width="203" height="69"/>
<path d="M1031,336 L1081,341 L1081,332 L1110,344 L1080,351 L1081,344 L1031,340Z"/>
<path d="M1130,590 L1134,596 L1162,582 L1130,576 L1133,584 L997,602 L997,609Z"/>
</g>
<g fill="#fff" stroke="#f00" stroke-width="2.500">
<rect x="875.500" y="283.500" width="141" height="64"/>
<rect x="806.500" y="378.500" width="175" height="96"/>
<rect x="786.500" y="571" width="202" height="67.500"/>
</g>
<text class="b" x="880" y="308" textLength="107" lengthAdjust="spacingAndGlyphs">Verify if  a</text>
<text class="b" x="880" y="336" textLength="121" lengthAdjust="spacingAndGlyphs">light exists</text>
<text class="b" x="811" y="404" textLength="134" lengthAdjust="spacingAndGlyphs">Try different</text>
<text class="b" x="811" y="433" textLength="151" lengthAdjust="spacingAndGlyphs">options of the</text>
<text class="b" x="811" y="461" textLength="70" lengthAdjust="spacingAndGlyphs">render</text>
<text class="b" x="791" y="597" textLength="177" lengthAdjust="spacingAndGlyphs">Greater number,</text>
<text class="b" x="791" y="625" textLength="128" lengthAdjust="spacingAndGlyphs">best quality</text>
<g fill="#f00">
<path d="M1029,331 L1080,336 L1079,329 L1108,341 L1078,348 L1080,340 L1029,336Z"/>
<path d="M993,415 L1055,434 L1053,427 L1082,444 L1049,445 L1052,439 L991,420Z"/>
<path d="M995,603 L1130,585 L1128,573 L1160,579 L1132,593 L1131,590 L995,608Z"/>
</g>
</svg>
</body></html>
